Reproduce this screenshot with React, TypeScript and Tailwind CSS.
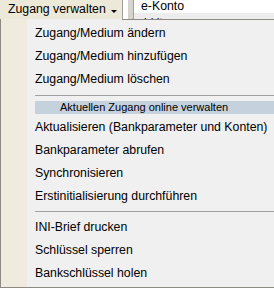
import React from "react";

const font = { fontFamily: '"Liberation Sans", Arial, sans-serif' };

function Item({ label }: { label: string }) {
  return (
    <div className="h-[23px] flex items-center pl-[8px] text-[12.3px] text-black whitespace-nowrap">
      {label}
    </div>
  );
}

export default function App() {
  return (
    <div className="w-[274px] h-[288px] overflow-hidden bg-white" style={font}>
      {/* top bar */}
      <div className="flex h-[19px]">
        <div className="w-[122px] bg-[#ece9d8] flex items-start">
          <span className="pl-[8px] pt-[2px] text-[12.3px] leading-[14px] text-black whitespace-nowrap">
            Zugang verwalten
          </span>
          <div className="ml-auto mr-[5px] mt-[10px] w-0 h-0 border-l-[3px] border-r-[3px] border-t-[3px] border-l-transparent border-r-transparent border-t-black" />
        </div>
        <div className="w-px bg-[#a0a0a0]" />
        <div className="w-[5px] bg-white" />
        <div className="w-[5px] bg-[#d6d3ce]" />
        <div className="w-px bg-[#a0a0a0]" />
        <div className="flex-1 flex flex-col">
          <div className="h-[13px] bg-white pl-[7px] text-[12.3px] leading-[12px] text-black whitespace-nowrap">
            e-Konto
          </div>
          <div className="h-[6px] bg-[#ededed] overflow-hidden pl-[10px] text-[12px] leading-[14px] text-black whitespace-nowrap pt-[3px]">
            ld lt
          </div>
        </div>
      </div>

      {/* menu */}
      <div className="flex h-[269px] border-l border-b border-[#8c8a82]">
        <div className="w-[26px] bg-[#efecdf]" />
        <div className="flex-1 flex flex-col bg-[#f0f0f0]">
          <div className="flex h-px">
            <div className="w-[95px]" />
            <div className="flex-1 bg-[#8c8a82]" />
          </div>
          <div className="h-[2px]" />
          <Item label="Zugang/Medium ändern" />
          <Item label="Zugang/Medium hinzufügen" />
          <Item label="Zugang/Medium löschen" />
          <div className="h-[9px] pt-[4px] pl-[8px]">
            <div className="h-px bg-[#a0a0a0]" />
          </div>
          <div className="h-px" />
          <div className="h-[13px] ml-[8px] bg-[#c5d1dd] pl-[25px] text-[11px] leading-[13px] text-black whitespace-nowrap">
            Aktuellen Zugang online verwalten
          </div>
          <div className="h-[2px]" />
          <Item label="Aktualisieren (Bankparameter und Konten)" />
          <Item label="Bankparameter abrufen" />
          <Item label="Synchronisieren" />
          <Item label="Erstinitialisierung durchführen" />
          <div className="h-[8px] pt-[3px] pl-[8px]">
            <div className="h-px bg-[#a0a0a0]" />
          </div>
          <Item label="INI-Brief drucken" />
          <Item label="Schlüssel sperren" />
          <Item label="Bankschlüssel holen" />
        </div>
      </div>
    </div>
  );
}
